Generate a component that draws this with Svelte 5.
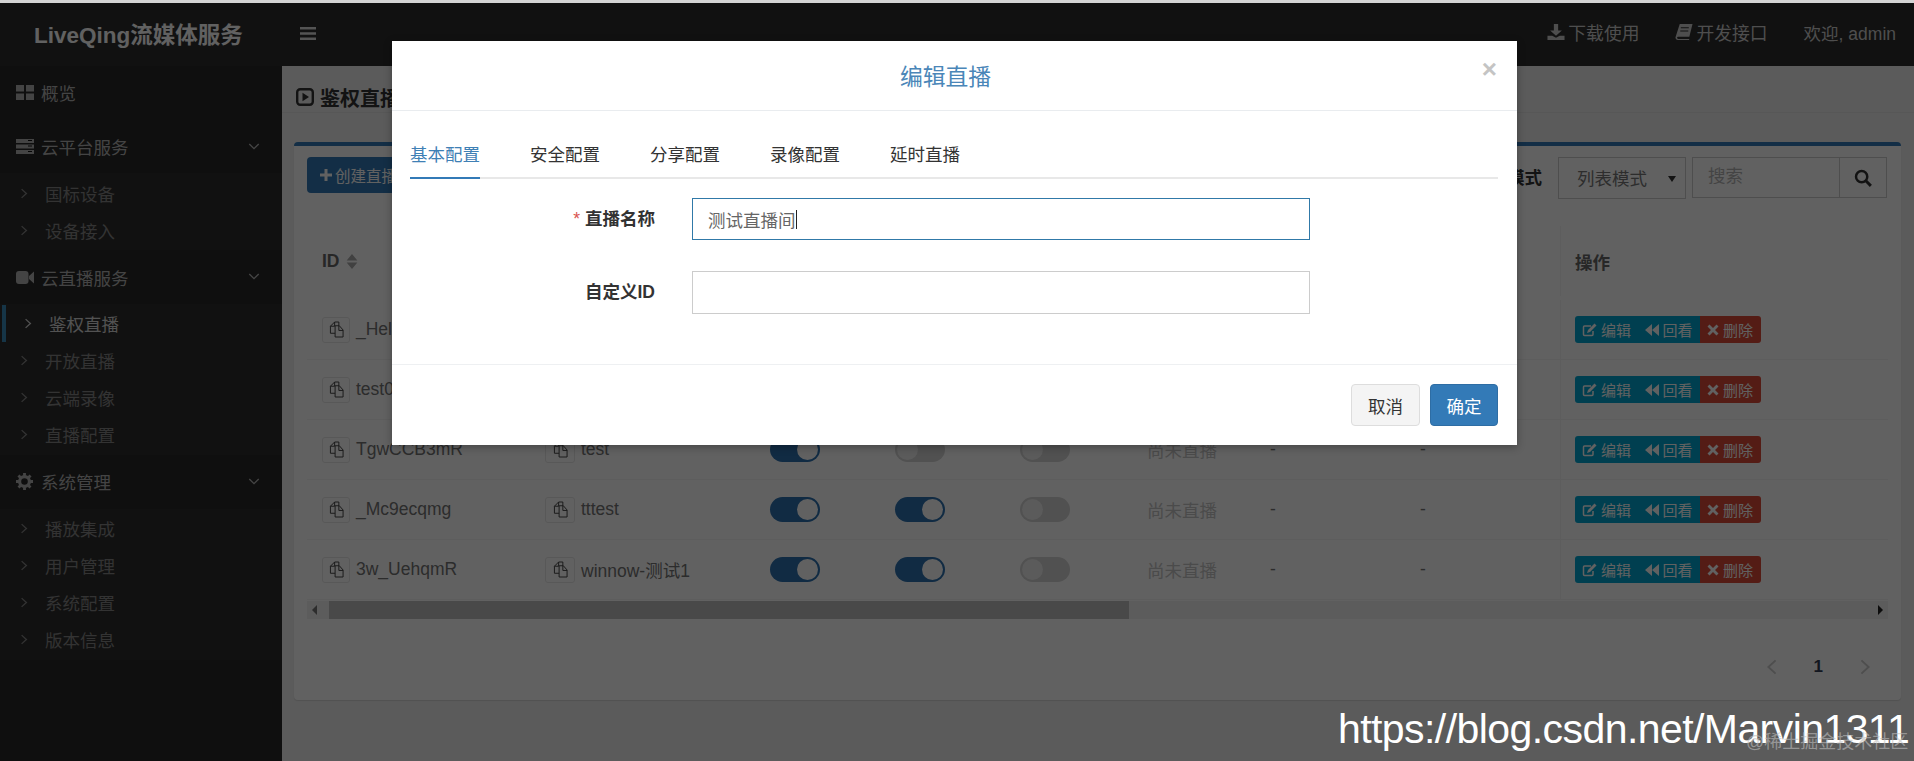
<script>
  const nav = [
    { icon: 'grid', label: '概览' },
    { icon: 'server', label: '云平台服务', open: true, kids: ['国标设备', '设备接入'] },
    { icon: 'video', label: '云直播服务', open: true, kids: ['鉴权直播', '开放直播', '云端录像', '直播配置'], active: '鉴权直播' },
    { icon: 'gear', label: '系统管理', open: true, kids: ['播放集成', '用户管理', '系统配置', '版本信息'] }
  ];
  const rows = [
    { id: '_HelIo0mR', name: 'hello', a: true, b: true, c: false },
    { id: 'test0001', name: 'test0', a: true, b: true, c: false },
    { id: 'TgwCCB3mR', name: 'test', a: true, b: false, c: false },
    { id: '_Mc9ecqmg', name: 'tttest', a: true, b: true, c: false },
    { id: '3w_UehqmR', name: 'winnow-测试1', a: true, b: true, c: false }
  ];
  const tabs = ['基本配置', '安全配置', '分享配置', '录像配置', '延时直播'];
</script>

{#snippet chevron(cls)}
  <svg class={cls} viewBox="0 0 10 14"><path d="M2 1.5 8 7l-6 5.5" fill="none" stroke="currentColor" stroke-width="1.6"/></svg>
{/snippet}

{#snippet copy()}
  <span class="copy">
    <svg viewBox="0 0 16 18" width="15" height="17"><path d="M6 1H10.500V5M6 1 1.500 5.500V13H6.500M6 1V5.500H1.500M6.500 5H11L15 9.500V17H6.500ZM10.500 5V10H15" fill="none" stroke="currentColor" stroke-width="1.050"/></svg>
  </span>
{/snippet}

{#snippet navIcon(name)}
  {#if name === 'grid'}
    <svg class="ni" viewBox="0 0 18 15"><path d="M0 0h8v6.500H0zM10 0h8v6.500h-8zM0 8.500h8V15H0zM10 8.500h8V15h-8z" fill="currentColor"/></svg>
  {:else if name === 'server'}
    <svg class="ni" viewBox="0 0 18 15"><path d="M0 0h18v4H0zM0 5.500h18v4H0zM0 11h18v4H0z" fill="currentColor"/><path d="M12 1.500h4M12 7h4M12 12.500h4" stroke="#0f0f0f" stroke-width="1"/></svg>
  {:else if name === 'video'}
    <svg class="ni" viewBox="0 0 18 15"><rect x="0" y="1" width="12.500" height="13" rx="3" fill="currentColor"/><path d="M13 6 18 1.500v12L13 9z" fill="currentColor"/></svg>
  {:else}
    <svg class="ni gear" viewBox="0 0 18 18"><circle cx="9" cy="9" r="5.200" fill="none" stroke="currentColor" stroke-width="3.400"/><path d="M9 0v18M0 9h18M2.600 2.600l12.800 12.800M15.400 2.600 2.600 15.400" stroke="currentColor" stroke-width="3" stroke-dasharray="3 12 3"/></svg>
  {/if}
{/snippet}

<div class="strip"></div>
<div class="shell">
  <header class="top">
    <div class="logo">LiveQing流媒体服务</div>
    <svg class="burger" viewBox="0 0 16 13"><path d="M0 0h16v2.600H0zM0 5.200h16v2.600H0zM0 10.400h16V13H0z" fill="currentColor"/></svg>
    <nav class="links">
      <span class="lnk"><svg viewBox="0 0 16 15" width="18" height="16"><path d="M6 0h4v6h3.500L8 11 2.500 6H6zM0 11h4.500L8 13l3.500-2H16v4H0z" fill="currentColor"/></svg>下载使用</span>
      <span class="lnk"><svg viewBox="0 0 16 15" width="18" height="16"><path d="M4 0h12l-3 12H2.500q-1 0-1 1t1 1H13l-.3 1H2q-2 0-2-2 0-.500.200-1zM5 3v1h7.500V3zM4.500 6v1H12V6z" fill="currentColor" fill-rule="evenodd"/></svg>开发接口</span>
      <span class="lnk welcome">欢迎, admin</span>
    </nav>
  </header>

  <aside class="side">
    {#each nav as item}
      <div class="item">
        {@render navIcon(item.icon)}
        <span>{item.label}</span>
        {#if item.open}<svg class="down" viewBox="0 0 14 10"><path d="M1.500 2 7 7.500 12.500 2" fill="none" stroke="currentColor" stroke-width="1.600"/></svg>{/if}
      </div>
      {#if item.kids}
        <div class="sub">
          {#each item.kids as kid}
            <div class="kid" class:on={kid === item.active}>
              {@render chevron('kc')}
              <span>{kid}</span>
            </div>
          {/each}
        </div>
      {/if}
    {/each}
  </aside>

  <main class="main">
    <div class="title">
      <svg viewBox="0 0 18 18" width="18" height="18"><rect x="1.200" y="1.200" width="15.600" height="15.600" rx="3" fill="none" stroke="currentColor" stroke-width="2.400"/><path d="M6.500 4.800 13 9l-6.500 4.200z" fill="currentColor"/></svg>
      <span>鉴权直播</span>
    </div>
    <section class="box">
      <div class="tools">
        <button class="create"><svg viewBox="0 0 12 12" width="12" height="12"><path d="M4.500 0h3v4.500H12v3H7.500V12h-3V7.500H0v-3h4.500z" fill="currentColor"/></svg>创建直播</button>
        <b class="mode">展示模式</b>
        <div class="select">列表模式<i></i></div>
        <div class="search">
          <span>搜索</span>
          <div class="sbtn"><svg viewBox="0 0 16 16" width="18" height="18"><circle cx="6.800" cy="6.800" r="5" fill="none" stroke="currentColor" stroke-width="2.200"/><path d="m10.500 10.500 4.500 4.500" stroke="currentColor" stroke-width="2.600"/></svg></div>
        </div>
      </div>
      <div class="table">
        <div class="row head">
          <div class="c c1">ID <svg class="sort" viewBox="0 0 10 14" width="12" height="15"><path d="M5 0 10 6H0zM5 14 0 8h10z" fill="currentColor"/></svg></div>
          <div class="c c2"></div><div class="c c3"></div><div class="c c3"></div><div class="c c3"></div><div class="c c3"></div><div class="c c7"></div><div class="c c8"></div>
          <div class="c c9">操作</div>
        </div>
        {#each rows as r}
          <div class="row">
            <div class="c c1">{@render copy()}{r.id}</div>
            <div class="c c2">{@render copy()}{r.name}</div>
            <div class="c c3"><span class="sw" class:lit={r.a}></span></div>
            <div class="c c3"><span class="sw" class:lit={r.b}></span></div>
            <div class="c c3"><span class="sw" class:lit={r.c}></span></div>
            <div class="c c3 status">尚未直播</div>
            <div class="c c7">-</div>
            <div class="c c8">-</div>
            <div class="c c9">
              <div class="ops">
                <span class="op teal"><svg viewBox="0 0 15 14" width="15" height="14"><path d="M11 8v3.500q0 1-1 1H2.500q-1 0-1-1V4q0-1 1-1H9" fill="none" stroke="currentColor" stroke-width="1.500"/><path d="M12.500.5 14.500 2.500 8 9l-3 1 1-3z" fill="currentColor"/></svg>编辑</span>
                <span class="op teal"><svg viewBox="0 0 14 14" width="14" height="14"><path d="M7 1v12L0 7zM14 1v12L7 7z" fill="currentColor"/></svg>回看</span>
                <span class="op red"><svg viewBox="0 0 12 12" width="12" height="12"><path d="M2.500.5 6 4 9.500.5l2 2L8 6l3.500 3.500-2 2L6 8l-3.500 3.500-2-2L4 6 .5 2.500z" fill="currentColor"/></svg>删除</span>
              </div>
            </div>
          </div>
        {/each}
      </div>
      <div class="scroll">
        <i class="al"></i>
        <div class="thumb"></div>
        <i class="ar"></i>
      </div>
      <div class="pager">
        {@render chevron('pg flip')}
        <b>1</b>
        {@render chevron('pg')}
      </div>
    </section>
  </main>

  <div class="overlay"></div>
</div>

<div class="modal">
  <div class="mh">
    <h2>编辑直播</h2>
    <span class="close">×</span>
  </div>
  <div class="mb">
    <div class="tabs">
      {#each tabs as t, i}
        <span class="tab" class:cur={i === 0}>{t}</span>
      {/each}
    </div>
    <div class="field first">
      <label for="nm"><em>*</em>直播名称</label>
      <div id="nm" class="inp focus"><span>测试直播间</span><i></i></div>
    </div>
    <div class="field">
      <label for="cid">自定义ID</label>
      <div id="cid" class="inp"></div>
    </div>
  </div>
  <div class="mf">
    <button class="cancel">取消</button>
    <button class="ok">确定</button>
  </div>
</div>

<div class="wm">https://blog.csdn.net/Marvin1311</div>
<div class="wm2">@稀土掘金技术社区</div>

<style>
  :global(body) {
    margin: 0;
    overflow: hidden;
    font-family: "Liberation Sans", "Noto Sans CJK SC", sans-serif;
    font-size: 17.5px;
    background: #5a5a5a;
  }
  .strip { height: 3px; background: #d4d4d4; }
  .shell {
    position: relative;
    height: 758px;
    display: grid;
    grid-template-columns: 282px 1fr;
    grid-template-rows: 63px 1fr;
    overflow: hidden;
  }
  .overlay { position: absolute; inset: 0; background: rgba(0, 0, 0, .62); }

  .top {
    grid-column: 1 / 3;
    background: #2d2d2d;
    display: flex;
    align-items: center;
    color: #bdbdbd;
  }
  .logo {
    width: 282px;
    box-sizing: border-box;
    padding-left: 34px;
    font-weight: 700;
    font-size: 22.500px;
    color: #fff;
    white-space: nowrap;
    margin-bottom: 3px;
  }
  .burger { width: 16px; height: 13px; margin: 0 0 3px 18px; color: #ddd; }
  .links { margin-left: auto; display: flex; align-items: center; padding: 0 18px 5px 0; font-size: 17.800px; }
  .lnk { display: flex; align-items: center; gap: 3px; margin-left: 36px; color: #ccc; }
  .welcome { font-size: 17.500px; }

  .side { background: #282828; color: #b4b4b4; }
  .item { height: 53.500px; display: flex; align-items: center; padding-left: 16px; position: relative; }
  .item span { margin-left: 7px; }
  .ni { width: 18px; height: 15px; flex: none; }
  .gear { height: 17px; width: 17px; margin-right: 1px; }
  .down { width: 12px; height: 9px; position: absolute; left: 248px; top: 22px; }
  .sub { background: #2e2e2e; padding: 1.500px 0 1.750px; color: #868686; }
  .kid { height: 37px; display: flex; align-items: center; padding-left: 20px; position: relative; }
  .kid span { margin-left: 17px; }
  .kid.on { color: #d8d8d8; padding-left: 24px; }
  .kid.on::before { content: ""; position: absolute; left: 2px; top: 0; bottom: 0; width: 4px; background: #3c8dbc; }
  :global(.kc) { width: 8px; height: 13px; flex: none; }

  .main { background: #eeeeee; display: flex; flex-direction: column; color: #444; min-width: 0; }
  .title {
    height: 47px;
    box-sizing: border-box;
    padding: 16px 0 0 14px;
    display: flex;
    align-items: center;
    gap: 6px;
    font-weight: 700;
    font-size: 20px;
    color: #333;
    border-bottom: 1px solid #e4e4e4;
    white-space: nowrap;
  }
  .box {
    margin: 29px 13px 0 12px;
    height: 558px;
    box-sizing: border-box;
    background: #fff;
    border-top: 4px solid #337ab7;
    border-radius: 4px;
    box-shadow: 0 1px 1px rgba(0, 0, 0, .1);
    display: flex;
    flex-direction: column;
  }
  .tools { display: flex; align-items: flex-start; padding: 11px 14px 0 13px; height: 43px; }
  .create {
    height: 36px;
    width: 130px;
    border: 0;
    border-radius: 4px;
    background: #337ab7;
    color: #fff;
    font: 15.500px "Liberation Sans", "Noto Sans CJK SC", sans-serif;
    display: flex;
    align-items: center;
    gap: 3px;
    padding: 0 0 0 13px;
    white-space: nowrap;
  }
  .mode { margin: 7px 16px 0 auto; color: #333; }
  .select {
    width: 128px;
    height: 42px;
    box-sizing: border-box;
    border: 1px solid #ccc;
    padding-left: 18px;
    line-height: 42px;
    color: #777;
    position: relative;
  }
  .select i {
    position: absolute;
    right: 9px;
    top: 18px;
    border: 4px solid transparent;
    border-top: 6px solid #333;
    border-bottom: 0;
  }
  .search { display: flex; margin-left: 6px; width: 195px; height: 41px; box-sizing: border-box; border: 1px solid #ccc; color: #b4b4b4; }
  .search span { flex: 1; padding-left: 15px; line-height: 37px; }
  .sbtn { width: 46px; border-left: 1px solid #ccc; display: flex; align-items: center; justify-content: center; color: #333; }

  .table { margin: 26px 13px 0; }
  .row { display: flex; height: 60px; border-bottom: 1px solid #f4f4f4; box-sizing: border-box; align-items: center; color: #747474; }
  .row.head { height: 74px; padding-bottom: 4px; font-weight: 700; color: #666; border-bottom: 0; }
  .c { box-sizing: border-box; padding-left: 15px; display: flex; align-items: center; white-space: nowrap; }
  .c1 { width: 223px; }
  .c2 { width: 225px; }
  .c3 { width: 125px; }
  .status { padding-left: 17px; color: #c4c4c4; }
  .c7 { width: 150px; }
  .c8 { width: 155px; }
  .c9 { flex: 1; height: 100%; padding-left: 14px; border-left: 1px solid #f4f4f4; }
  .sort { margin-left: 6px; color: #aaa; }
  .copy {
    width: 28px;
    height: 26px;
    box-sizing: border-box;
    border: 1px solid #e8e8e8;
    border-radius: 3px;
    display: flex;
    align-items: center;
    justify-content: center;
    margin-right: 6px;
    color: #444;
  }
  .c2 .copy { width: 30px; }
  .sw {
    width: 50px;
    height: 25px;
    border-radius: 13px;
    background: #d4d4d4;
    position: relative;
    display: block;
  }
  .sw::after {
    content: "";
    position: absolute;
    top: 2px;
    left: 2px;
    width: 21px;
    height: 21px;
    border-radius: 50%;
    background: #eee;
  }
  .sw.lit { background: #2d72b0; }
  .sw.lit::after { left: 27px; background: #fff; }
  .ops { display: flex; border-radius: 3px; overflow: hidden; height: 27px; color: #fff; font-size: 15px; }
  .op { display: flex; align-items: center; gap: 4px; padding: 0 0 0 7px; box-sizing: border-box; }
  .teal { background: #00a7d2; width: 62.500px; }
  .red { background: #dd4b39; width: 61px; }

  .scroll { margin: 1px 13px 0; height: 18px; background: #f1f1f1; position: relative; display: flex; align-items: center; }
  .thumb { position: absolute; left: 22px; width: 800px; top: 0; bottom: 0; background: #c1c1c1; }
  .al, .ar { position: absolute; border: 5px solid transparent; }
  .al { left: 5px; border-right: 5px solid #777; border-left: 0; }
  .ar { right: 5px; border-left: 5px solid #222; border-right: 0; }
  .pager { display: flex; align-items: center; justify-content: flex-end; padding: 38px 30px 0 0; gap: 36px; color: #ccc; }
  .pager b { font-weight: 700; color: #333d55; font-size: 17px; }
  :global(.pg) { width: 12px; height: 18px; }
  :global(.flip) { transform: scaleX(-1); }

  .modal {
    position: absolute;
    left: 392px;
    top: 41px;
    width: 1125px;
    height: 404px;
    background: #fff;
    display: flex;
    flex-direction: column;
    box-shadow: 0 2px 8px rgba(0, 0, 0, .3);
  }
  .mh { height: 70px; box-sizing: border-box; padding: 0 18px 0 0; border-bottom: 1px solid #e9ecef; position: relative; display: flex; align-items: center; justify-content: center; }
  .mh h2 { margin: 0; font-size: 22.800px; font-weight: 400; color: #4a86b8; }
  .close { position: absolute; right: 20px; top: 7px; font-size: 26px; font-weight: 700; color: #c4c4c4; line-height: 42px; }
  .mb { flex: 1; padding: 0 19px 0 18px; }
  .tabs { display: flex; gap: 50px; height: 68px; box-sizing: border-box; align-items: flex-end; border-bottom: 2px solid #e8e8e8; color: #333; }
  .tab { height: 43px; box-sizing: border-box; margin-bottom: -2px; line-height: 38px; border-bottom: 2px solid transparent; }
  .tab.cur { color: #3f80b5; border-color: #337ab7; }
  .field { display: flex; align-items: center; margin-top: 31px; }
  .field.first { margin-top: 19px; }
  .field label { width: 245px; text-align: right; font-weight: 700; color: #333; margin: -4px 0 0 0; }
  .field em { color: #d9534f; font-style: normal; font-weight: 400; margin-right: 5px; }
  .inp {
    margin-left: 37px;
    width: 618px;
    height: 43px;
    box-sizing: border-box;
    border: 1px solid #ccc;
    padding-left: 15px;
    display: flex;
    align-items: center;
    color: #666;
  }
  .inp.focus { border-color: #3079a8; height: 42px; }
  .inp i { width: 1px; height: 19px; background: #222; }
  .mf { height: 81px; box-sizing: border-box; border-top: 1px solid #eef0f2; display: flex; justify-content: flex-end; align-items: flex-start; gap: 10px; padding: 19px 19px 0 0; }
  .mf button { height: 42px; border-radius: 4px; font: 17.500px "Liberation Sans", "Noto Sans CJK SC", sans-serif; padding: 0; }
  .cancel { width: 69px; background: #f4f4f4; border: 1px solid #ddd; color: #333; }
  .ok { width: 68px; background: #337ab7; border: 1px solid #2e6da4; color: #fff; }

  .wm { position: absolute; left: 1338px; top: 702px; font-size: 41px; letter-spacing: -.57px; color: #fff; white-space: nowrap; line-height: 54px; }
  .wm2 { position: absolute; left: 1746px; top: 731px; font-size: 18px; color: rgba(190, 190, 190, .6); white-space: nowrap; line-height: 22px; }
</style>
